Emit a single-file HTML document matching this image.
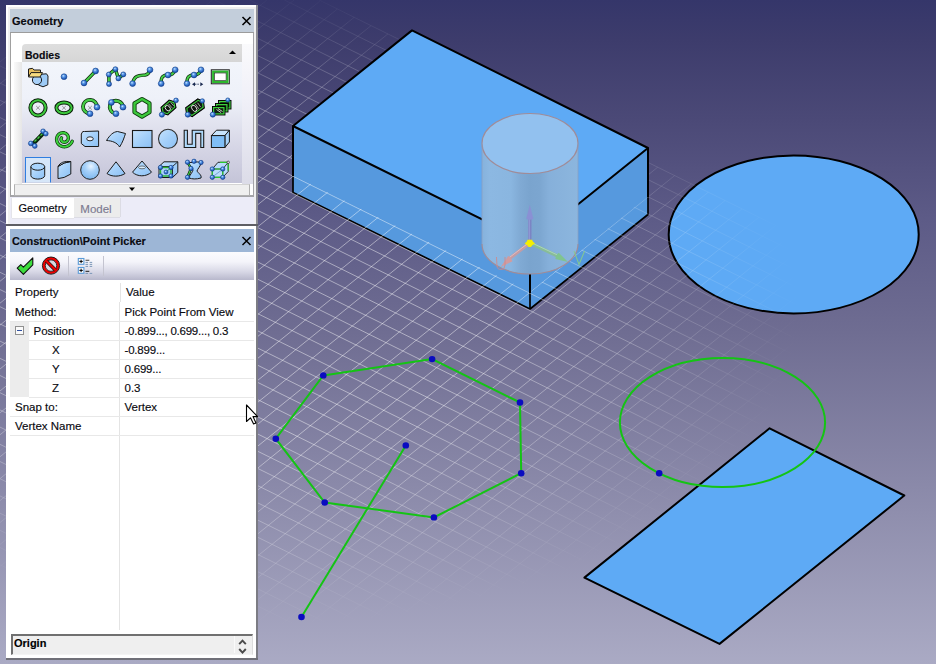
<!DOCTYPE html>
<html><head><meta charset="utf-8">
<style>
html,body{margin:0;padding:0;}
body{width:936px;height:664px;overflow:hidden;position:relative;font-family:"Liberation Sans",sans-serif;
background:linear-gradient(to bottom,#35366a 0%,#3d3c6c 6%,#4b4977 18%,#5d5b87 33%,#6f6d92 50%,#aaaac4 100%);}
.a{position:absolute;}
.t{position:absolute;white-space:nowrap;line-height:1;color:#0a0a10;-webkit-text-stroke:0.15px currentColor;}
svg{position:absolute;left:0;top:0;}
</style></head><body>
<svg id="scene" width="936" height="664" viewBox="0 0 936 664">
<defs>
<radialGradient id="gfade" gradientUnits="userSpaceOnUse" cx="272" cy="309" r="530" gradientTransform="translate(272 309) scale(1 0.6038) translate(-272 -309)">
<stop offset="0" stop-color="#fff" stop-opacity="1"/>
<stop offset="0.4" stop-color="#fff" stop-opacity="1"/>
<stop offset="0.7" stop-color="#fff" stop-opacity="0.55"/>
<stop offset="0.88" stop-color="#fff" stop-opacity="0.18"/>
<stop offset="1" stop-color="#fff" stop-opacity="0"/>
</radialGradient>
<mask id="gmask" maskUnits="userSpaceOnUse" x="0" y="0" width="936" height="664">
<rect x="0" y="0" width="936" height="664" fill="url(#gfade)"/>
</mask>
<linearGradient id="cylg" x1="0" y1="0" x2="1" y2="0">
<stop offset="0" stop-color="#86b2dc"/>
<stop offset="0.08" stop-color="#8cb8e2"/>
<stop offset="0.3" stop-color="#8ab6e0"/>
<stop offset="0.4" stop-color="#80aad4"/>
<stop offset="0.5" stop-color="#7aa4ce"/>
<stop offset="0.6" stop-color="#7ca6d0"/>
<stop offset="0.7" stop-color="#86b0da"/>
<stop offset="1" stop-color="#8cb6de"/>
</linearGradient>
</defs>
<!-- disk -->
<ellipse cx="793.7" cy="234.4" rx="125" ry="79" fill="#5eaaf5" stroke="#000" stroke-width="2"/>
<!-- box lower faces -->
<polygon points="293,126 530,243 530,309 293,192" fill="#5699de"/>
<polygon points="530,243 648,148 648,214.5 530,309" fill="#5699de"/>
<g stroke="#000" stroke-width="1.7" fill="none" stroke-linejoin="round">
<polyline points="293,175 293,192.4 530,309 648,214.5 648,196"/>
<line x1="530" y1="292" x2="530" y2="309"/>
</g>
<!-- grid -->
<g mask="url(#gmask)">
<g id="grid" stroke="#ffffff" stroke-opacity="0.45" stroke-width="1" fill="none">
<line x1="168.8" y1="-74.3" x2="994.9" y2="333.8"/>
<line x1="155.5" y1="-63.7" x2="981.7" y2="344.5"/>
<line x1="142.3" y1="-53.0" x2="968.5" y2="355.2"/>
<line x1="129.1" y1="-42.3" x2="955.2" y2="365.8"/>
<line x1="115.9" y1="-31.7" x2="942.0" y2="376.5"/>
<line x1="102.7" y1="-21.0" x2="928.8" y2="387.2"/>
<line x1="89.4" y1="-10.3" x2="915.6" y2="397.8"/>
<line x1="76.2" y1="0.3" x2="902.4" y2="408.5"/>
<line x1="63.0" y1="11.0" x2="889.1" y2="419.2"/>
<line x1="49.8" y1="21.7" x2="875.9" y2="429.9"/>
<line x1="36.6" y1="32.4" x2="862.7" y2="440.5"/>
<line x1="23.3" y1="43.0" x2="849.5" y2="451.2"/>
<line x1="10.1" y1="53.7" x2="836.3" y2="461.9"/>
<line x1="-3.1" y1="64.4" x2="823.0" y2="472.5"/>
<line x1="-16.3" y1="75.0" x2="809.8" y2="483.2"/>
<line x1="-29.5" y1="85.7" x2="796.6" y2="493.9"/>
<line x1="-42.8" y1="96.4" x2="783.4" y2="504.5"/>
<line x1="-56.0" y1="107.0" x2="770.2" y2="515.2"/>
<line x1="-69.2" y1="117.7" x2="756.9" y2="525.9"/>
<line x1="-82.4" y1="128.4" x2="743.7" y2="536.5"/>
<line x1="-95.6" y1="139.1" x2="730.5" y2="547.2"/>
<line x1="-108.9" y1="149.7" x2="717.3" y2="557.9"/>
<line x1="-122.1" y1="160.4" x2="704.1" y2="568.6"/>
<line x1="-135.3" y1="171.1" x2="690.8" y2="579.2"/>
<line x1="-148.5" y1="181.7" x2="677.6" y2="589.9"/>
<line x1="-161.7" y1="192.4" x2="664.4" y2="600.6"/>
<line x1="-175.0" y1="203.1" x2="651.2" y2="611.2"/>
<line x1="-188.2" y1="213.7" x2="638.0" y2="621.9"/>
<line x1="-201.4" y1="224.4" x2="624.7" y2="632.6"/>
<line x1="-214.6" y1="235.1" x2="611.5" y2="643.2"/>
<line x1="-227.8" y1="245.8" x2="598.3" y2="653.9"/>
<line x1="-241.1" y1="256.4" x2="585.1" y2="664.6"/>
<line x1="-254.3" y1="267.1" x2="571.9" y2="675.3"/>
<line x1="-267.5" y1="277.8" x2="558.6" y2="685.9"/>
<line x1="-280.7" y1="288.4" x2="545.4" y2="696.6"/>
<line x1="-293.9" y1="299.1" x2="532.2" y2="707.3"/>
<line x1="-307.2" y1="309.8" x2="519.0" y2="717.9"/>
<line x1="-320.4" y1="320.4" x2="505.8" y2="728.6"/>
<line x1="-333.6" y1="331.1" x2="492.5" y2="739.3"/>
<line x1="-346.8" y1="341.8" x2="479.3" y2="750.0"/>
<line x1="-360.0" y1="352.5" x2="466.1" y2="760.6"/>
<line x1="-373.3" y1="363.1" x2="452.9" y2="771.3"/>
<line x1="-386.5" y1="373.8" x2="439.7" y2="782.0"/>
<line x1="-399.7" y1="384.5" x2="426.4" y2="792.6"/>
<line x1="-412.9" y1="395.1" x2="413.2" y2="803.3"/>
<line x1="168.8" y1="-74.3" x2="-412.9" y2="395.1"/>
<line x1="185.6" y1="-66.0" x2="-396.1" y2="403.5"/>
<line x1="202.5" y1="-57.7" x2="-379.2" y2="411.8"/>
<line x1="219.3" y1="-49.4" x2="-362.3" y2="420.1"/>
<line x1="236.2" y1="-41.0" x2="-345.5" y2="428.5"/>
<line x1="253.1" y1="-32.7" x2="-328.6" y2="436.8"/>
<line x1="269.9" y1="-24.4" x2="-311.8" y2="445.1"/>
<line x1="286.8" y1="-16.0" x2="-294.9" y2="453.4"/>
<line x1="303.6" y1="-7.7" x2="-278.0" y2="461.8"/>
<line x1="320.5" y1="0.6" x2="-261.2" y2="470.1"/>
<line x1="337.4" y1="9.0" x2="-244.3" y2="478.4"/>
<line x1="354.2" y1="17.3" x2="-227.5" y2="486.8"/>
<line x1="371.1" y1="25.6" x2="-210.6" y2="495.1"/>
<line x1="387.9" y1="33.9" x2="-193.7" y2="503.4"/>
<line x1="404.8" y1="42.3" x2="-176.9" y2="511.8"/>
<line x1="421.7" y1="50.6" x2="-160.0" y2="520.1"/>
<line x1="438.5" y1="58.9" x2="-143.2" y2="528.4"/>
<line x1="455.4" y1="67.3" x2="-126.3" y2="536.7"/>
<line x1="472.2" y1="75.6" x2="-109.4" y2="545.1"/>
<line x1="489.1" y1="83.9" x2="-92.6" y2="553.4"/>
<line x1="506.0" y1="92.2" x2="-75.7" y2="561.7"/>
<line x1="522.8" y1="100.6" x2="-58.9" y2="570.1"/>
<line x1="539.7" y1="108.9" x2="-42.0" y2="578.4"/>
<line x1="556.5" y1="117.2" x2="-25.1" y2="586.7"/>
<line x1="573.4" y1="125.6" x2="-8.3" y2="595.0"/>
<line x1="590.3" y1="133.9" x2="8.6" y2="603.4"/>
<line x1="607.1" y1="142.2" x2="25.4" y2="611.7"/>
<line x1="624.0" y1="150.6" x2="42.3" y2="620.0"/>
<line x1="640.8" y1="158.9" x2="59.2" y2="628.4"/>
<line x1="657.7" y1="167.2" x2="76.0" y2="636.7"/>
<line x1="674.6" y1="175.6" x2="92.9" y2="645.0"/>
<line x1="691.4" y1="183.9" x2="109.7" y2="653.4"/>
<line x1="708.3" y1="192.2" x2="126.6" y2="661.7"/>
<line x1="725.1" y1="200.5" x2="143.5" y2="670.0"/>
<line x1="742.0" y1="208.9" x2="160.3" y2="678.4"/>
<line x1="758.9" y1="217.2" x2="177.2" y2="686.7"/>
<line x1="775.7" y1="225.5" x2="194.0" y2="695.0"/>
<line x1="792.6" y1="233.9" x2="210.9" y2="703.3"/>
<line x1="809.4" y1="242.2" x2="227.8" y2="711.7"/>
<line x1="826.3" y1="250.5" x2="244.6" y2="720.0"/>
<line x1="843.2" y1="258.9" x2="261.5" y2="728.3"/>
<line x1="860.0" y1="267.2" x2="278.3" y2="736.7"/>
<line x1="876.9" y1="275.5" x2="295.2" y2="745.0"/>
<line x1="893.7" y1="283.8" x2="312.1" y2="753.3"/>
<line x1="910.6" y1="292.2" x2="328.9" y2="761.7"/>
<line x1="927.5" y1="300.5" x2="345.8" y2="770.0"/>
<line x1="944.3" y1="308.8" x2="362.6" y2="778.3"/>
<line x1="961.2" y1="317.2" x2="379.5" y2="786.6"/>
<line x1="978.0" y1="325.5" x2="396.4" y2="795.0"/>
<line x1="994.9" y1="333.8" x2="413.2" y2="803.3"/>
</g>
</g>
<!-- box upper faces (above grid plane) -->
<polygon points="412,30.4 293,126 530,243 648,148" fill="#5eaaf5"/>
<polygon points="293,126 530,243 530,291.8 293,175.2" fill="#5699de"/>
<polygon points="530,243 648,148 648,195.8 530,291.8" fill="#5699de"/>
<g stroke="#000" stroke-width="2" fill="none" stroke-linejoin="round">
<polygon points="412,30.4 293,126 530,243 648,148"/>
<polyline points="293,126 293,176"/>
<polyline points="648,148 648,197"/>
<line x1="530" y1="243" x2="530" y2="293"/>
</g>
<!-- cylinder -->
<path d="M482,143.5 L482,244 A48,30 0 0 0 578,244 L578,143.5 Z" fill="url(#cylg)"/>
<ellipse cx="530" cy="143.5" rx="48" ry="30" fill="#92c1ef"/>
<g fill="none" stroke="#a08c98" stroke-width="1.2">
<ellipse cx="530" cy="143.5" rx="48" ry="30"/>
<path d="M482,244 A48,30 0 0 0 578,244"/>
</g>
<path d="M482,143.5 L482,244 M578,143.5 L578,244" stroke="#8aa0c0" stroke-width="0.8" fill="none"/>
<!-- triad -->
<g>
<line x1="529.8" y1="242" x2="529.8" y2="218" stroke="#7c84c4" stroke-width="3.4"/>
<line x1="529.2" y1="242" x2="529.2" y2="218" stroke="#a0a8e0" stroke-width="0.8"/>
<path d="M529.8,204.8 L533.4,219.0 Q529.8,220.5 526.2,219.0 Z" fill="#8a90d4"/>
<line x1="529.8" y1="243" x2="509.5" y2="258.5" stroke="#c49ca4" stroke-width="3.2"/>
<line x1="529.3" y1="242.3" x2="509" y2="257.8" stroke="#e4c4c8" stroke-width="0.8"/>
<path d="M500.8,267.0 L508.1,256.1 Q511.4,257.7 512.5,261.3 Z" fill="#d09ca0"/>
<line x1="529.8" y1="243" x2="557" y2="255.8" stroke="#88bc98" stroke-width="3.2"/>
<line x1="530.3" y1="242.2" x2="557.5" y2="255" stroke="#b4dcc0" stroke-width="0.8"/>
<path d="M568.0,261.9 L555.3,258.9 Q555.7,255.1 558.7,252.7 Z" fill="#80c490"/>
<path d="M527.6,239.8 L532,239.8 L533,241.8 L535,243.5 L532.5,245 L531,247 L528.6,247 L527,245 L524.6,243.5 L526.6,241.8 Z" fill="#f4ee00"/>
<path d="M496.5,257 L497,266 Q497.5,270 501.5,269.5 Q505,269 505,265 L505,257" fill="none" stroke="#d08888" stroke-width="1" opacity="0.85"/>
<path d="M574,251 L579,264.5 L584.6,251" fill="none" stroke="#88cc88" stroke-width="1.1" opacity="0.85"/>
</g>
<!-- rectangle -->
<polygon points="769.6,428.3 904.3,495.5 719.5,643.9 584.4,577.6" fill="#5eaaf5" stroke="#000" stroke-width="2" stroke-linejoin="round"/>
<!-- green circle -->
<ellipse cx="722.5" cy="422.5" rx="102.6" ry="64.5" fill="none" stroke="#14c414" stroke-width="2"/>

<!-- heptagon & line -->
<g stroke="#14c414" stroke-width="2" fill="none">
<polygon points="323.3,375.4 432.1,359.1 520,402.5 521.2,473.2 433.9,517.4 324.7,502.5 275.8,438.7"/>
<line x1="405.8" y1="445.4" x2="301.5" y2="617"/>
</g>
<g fill="#0a0cc0">
<ellipse cx="323.3" cy="375.4" rx="3.3" ry="3.2"/>
<ellipse cx="432.1" cy="359.1" rx="3.3" ry="3.2"/>
<ellipse cx="520" cy="402.5" rx="3.3" ry="3.2"/>
<ellipse cx="521.2" cy="473.2" rx="3.3" ry="3.2"/>
<ellipse cx="433.9" cy="517.4" rx="3.3" ry="3.2"/>
<ellipse cx="324.7" cy="502.5" rx="3.3" ry="3.2"/>
<ellipse cx="275.8" cy="438.7" rx="3.3" ry="3.2"/>
<ellipse cx="405.8" cy="445.4" rx="3.3" ry="3.2"/>
<ellipse cx="301.5" cy="617" rx="3.3" ry="3.2"/>
<ellipse cx="659.2" cy="473.2" rx="3.3" ry="3.2"/>
</g>
</svg>

<!-- PANEL 1 -->
<div class="a" style="left:6px;top:5px;width:250px;height:219px;background:#fff;"></div>
<div class="a" style="left:256px;top:5px;width:2px;height:221px;background:#8c8c94;"></div>
<div class="a" style="left:8px;top:7px;width:248px;height:217px;background:#f0f0f0;"></div>
<div class="a" style="left:10px;top:9px;width:244px;height:23px;background:#c3cedb;"></div>
<div class="a" style="left:10px;top:32px;width:244px;height:1px;background:#9c9c9c;"></div>
<div class="t" style="left:12px;top:15.5px;font-size:11px;font-weight:bold;">Geometry</div>
<svg class="a" style="left:241px;top:16px" width="11" height="10" viewBox="0 0 11 10"><path d="M1.5,1 L9.5,9 M9.5,1 L1.5,9" stroke="#000" stroke-width="1.6"/></svg>
<div class="a" style="left:10px;top:33px;width:244px;height:191px;background:#ececf8;"></div>
<div class="a" style="left:10px;top:33px;width:244px;height:164px;background:#fff;border-left:1px solid #a0a0a0;border-bottom:2px solid #a4a4a8;box-sizing:border-box;"></div>
<div class="a" style="left:253px;top:33px;width:1px;height:164px;background:#a4a4a8;"></div>
<div class="a" style="left:14px;top:62px;width:8px;height:122px;background:linear-gradient(to right,#fafafa,#e6e6e6);"></div>
<div class="a" style="left:22px;top:44px;width:220px;height:18px;background:linear-gradient(to bottom,#dedede,#d6d6d6);border-radius:4px 0 0 0;"></div>
<div class="t" style="left:25px;top:49.7px;font-size:10.5px;font-weight:bold;">Bodies</div>
<svg class="a" style="left:228px;top:49px" width="9" height="6" viewBox="0 0 9 6"><path d="M1,5 L4.5,1.5 L8,5 Z" fill="#000"/></svg>
<div class="a" style="left:22px;top:62px;width:220px;height:120.5px;background:linear-gradient(to bottom,#f2f5fb 0%,#eef1f9 30%,#d6d6e6 70%,#c4c4d8 100%);"></div>
<div class="a" style="left:242px;top:44px;width:11px;height:140px;background:linear-gradient(to bottom,#fafafc,#f0f0f8 40%,#dcdce8);"></div>
<div class="a" style="left:14px;top:183.5px;width:234px;height:10px;background:#efefef;border:1px solid #b0b0b0;border-top-color:#d4d4d4;"></div>
<svg class="a" style="left:128px;top:186px" width="8" height="6" viewBox="0 0 8 6"><path d="M1,1.5 L7,1.5 L4,5 Z" fill="#000"/></svg>
<div class="a" style="left:12px;top:198px;width:62px;height:20px;background:#fff;box-shadow:-1px 0 0 #e4e4ea, 0 1px 0 #e4e4ea;"></div>
<div class="a" style="left:74px;top:198px;width:46px;height:19px;background:#ececec;box-shadow:1px 0 0 #dcdce4, 0 1px 0 #dcdce4;"></div>
<div class="t" style="left:18.5px;top:203.3px;font-size:11px;">Geometry</div>
<div class="t" style="left:80.3px;top:203.9px;font-size:11.5px;color:#7c7a90;">Model</div>
<!-- palette icons -->
<svg class="a" style="left:0;top:0" width="260" height="190" viewBox="0 0 260 190"><clipPath id="palclip"><rect x="22" y="62" width="220" height="120.5"/></clipPath><defs>
<radialGradient id="ballg" cx="0.4" cy="0.35" r="0.65"><stop offset="0" stop-color="#cfe6ff"/><stop offset="0.35" stop-color="#5a9ae8"/><stop offset="1" stop-color="#1246a8"/></radialGradient>
<linearGradient id="bsurf" x1="0" y1="0" x2="1" y2="1"><stop offset="0" stop-color="#c6e2fc"/><stop offset="0.5" stop-color="#a4d0fa"/><stop offset="1" stop-color="#8cc0f4"/></linearGradient>
<radialGradient id="sphg" cx="0.55" cy="0.3" r="0.75"><stop offset="0" stop-color="#e8f4ff"/><stop offset="0.4" stop-color="#a8d2fa"/><stop offset="1" stop-color="#78b4ee"/></radialGradient>
</defs><g clip-path="url(#palclip)">
<rect x="25.5" y="157.5" width="25" height="27" fill="#d6e6f8" stroke="#2f7ee0" stroke-width="1"/>
<path d="M37.8,74.5 L46.5,73.8 L48,76 L47.8,84.8 L43,86.8 L38.5,85 Z" fill="#9ccaf6" stroke="#1a1a1a" stroke-width="1"/>
<circle cx="37" cy="80" r="4.6" fill="#a8d0f8" stroke="#1a1a1a" stroke-width="1"/>
<path d="M28.5,69 L32.5,68.3 L34,70 L40.5,70 L40.5,73 L28.5,76.5 Z" fill="#e8c060" stroke="#1a1a1a" stroke-width="1"/>
<path d="M28.5,77 L31,72.6 L42.5,72.6 L40,77 Z" fill="#f8dc80" stroke="#1a1a1a" stroke-width="1"/>
<circle cx="64" cy="76.7" r="2.9" fill="url(#ballg)" stroke="#12408a" stroke-width="0.6"/>
<path d="M84,83 L95.6,71" fill="none" stroke="#0a280a" stroke-width="3.4" stroke-linecap="round" stroke-linejoin="round"/><path d="M84,83 L95.6,71" fill="none" stroke="#46cc46" stroke-width="2.0" stroke-linecap="round" stroke-linejoin="round"/>
<circle cx="84" cy="83" r="2.9" fill="url(#ballg)" stroke="#12408a" stroke-width="0.6"/><circle cx="95.6" cy="71" r="2.9" fill="url(#ballg)" stroke="#12408a" stroke-width="0.6"/>
<path d="M109,84 L108.8,74.5 L115.4,69.2 L118.4,78.4 L123.3,74.4" fill="none" stroke="#0a280a" stroke-width="3.4" stroke-linecap="round" stroke-linejoin="round"/><path d="M109,84 L108.8,74.5 L115.4,69.2 L118.4,78.4 L123.3,74.4" fill="none" stroke="#46cc46" stroke-width="2.0" stroke-linecap="round" stroke-linejoin="round"/>
<circle cx="109" cy="84" r="2.5" fill="url(#ballg)" stroke="#12408a" stroke-width="0.6"/>
<circle cx="108.8" cy="74.5" r="2.5" fill="url(#ballg)" stroke="#12408a" stroke-width="0.6"/>
<circle cx="115.4" cy="69.2" r="2.5" fill="url(#ballg)" stroke="#12408a" stroke-width="0.6"/>
<circle cx="118.4" cy="78.4" r="2.5" fill="url(#ballg)" stroke="#12408a" stroke-width="0.6"/>
<circle cx="123.3" cy="74.4" r="2.5" fill="url(#ballg)" stroke="#12408a" stroke-width="0.6"/>
<path d="M132.6,83.6 C134,75 140,75.5 145,75 C149,74.5 149,72 150,69.8" fill="none" stroke="#0a280a" stroke-width="3.4" stroke-linecap="round" stroke-linejoin="round"/><path d="M132.6,83.6 C134,75 140,75.5 145,75 C149,74.5 149,72 150,69.8" fill="none" stroke="#46cc46" stroke-width="2.0" stroke-linecap="round" stroke-linejoin="round"/>
<circle cx="132.6" cy="83.6" r="2.9" fill="url(#ballg)" stroke="#12408a" stroke-width="0.6"/><circle cx="150" cy="69.8" r="2.9" fill="url(#ballg)" stroke="#12408a" stroke-width="0.6"/>
<path d="M161.2,83.6 C160.5,76 164,75 168,75 C172,75 174,73 175.2,69.8" fill="none" stroke="#0a280a" stroke-width="3.4" stroke-linecap="round" stroke-linejoin="round"/><path d="M161.2,83.6 C160.5,76 164,75 168,75 C172,75 174,73 175.2,69.8" fill="none" stroke="#46cc46" stroke-width="2.0" stroke-linecap="round" stroke-linejoin="round"/>
<circle cx="161.2" cy="83.6" r="2.9" fill="url(#ballg)" stroke="#12408a" stroke-width="0.6"/><circle cx="168" cy="75" r="2.9" fill="url(#ballg)" stroke="#12408a" stroke-width="0.6"/><circle cx="175.2" cy="69.8" r="2.9" fill="url(#ballg)" stroke="#12408a" stroke-width="0.6"/>
<path d="M187,83.6 C186.5,76 190,75 194,75 C198,75 200,73 201,69.8" fill="none" stroke="#0a280a" stroke-width="3.4" stroke-linecap="round" stroke-linejoin="round"/><path d="M187,83.6 C186.5,76 190,75 194,75 C198,75 200,73 201,69.8" fill="none" stroke="#46cc46" stroke-width="2.0" stroke-linecap="round" stroke-linejoin="round"/>
<circle cx="187" cy="83.6" r="2.9" fill="url(#ballg)" stroke="#12408a" stroke-width="0.6"/><circle cx="194" cy="75" r="2.9" fill="url(#ballg)" stroke="#12408a" stroke-width="0.6"/><circle cx="201" cy="69.8" r="2.9" fill="url(#ballg)" stroke="#12408a" stroke-width="0.6"/>
<path d="M192,84.2 L195,82.2 L195,86.2 Z M203.3,84.2 L200.3,82.2 L200.3,86.2 Z" fill="#1a2a50"/><path d="M195,84.2 h1.4 M197.4,84.2 h1.4" stroke="#1a2a50" stroke-width="0.9"/>
<rect x="211.3" y="69.8" width="18" height="14" fill="none" stroke="#1a1a1a" stroke-width="1"/><rect x="213.2" y="71.7" width="14.2" height="10.2" fill="#fff" stroke="#2cb82c" stroke-width="2.2"/><rect x="214.5" y="73" width="11.6" height="7.6" fill="none" stroke="#1a1a1a" stroke-width="0.6"/>
<ellipse cx="38" cy="107.8" rx="7.6" ry="7.6" fill="none" stroke="#0a200a" stroke-width="4.0"/><ellipse cx="38" cy="107.8" rx="7.6" ry="7.6" fill="none" stroke="#3cc83c" stroke-width="2.0"/><path d="M36.2,106.0 L39.8,109.6 M39.8,106.0 L36.2,109.6" stroke="#808080" stroke-width="0.8"/>
<ellipse cx="64" cy="107.8" rx="7.6" ry="5.4" fill="none" stroke="#0a200a" stroke-width="4.0"/><ellipse cx="64" cy="107.8" rx="7.6" ry="5.4" fill="none" stroke="#3cc83c" stroke-width="2.0"/><path d="M62.2,106.0 L65.8,109.6 M65.8,106.0 L62.2,109.6" stroke="#808080" stroke-width="0.8"/>
<path d="M88.2,106.0 L91.8,109.6 M91.8,106.0 L88.2,109.6" stroke="#808080" stroke-width="0.8"/><path d="M90,113.5 A7,6.8 0 1 1 97,107.2" fill="none" stroke="#0a280a" stroke-width="3.8" stroke-linecap="round" stroke-linejoin="round"/><path d="M90,113.5 A7,6.8 0 1 1 97,107.2" fill="none" stroke="#46cc46" stroke-width="2.4" stroke-linecap="round" stroke-linejoin="round"/><circle cx="97" cy="107.2" r="2.9" fill="url(#ballg)" stroke="#12408a" stroke-width="0.6"/><circle cx="90" cy="113.7" r="2.9" fill="url(#ballg)" stroke="#12408a" stroke-width="0.6"/>
<path d="M116,113.6 A7,6.8 0 0 1 111.4,102.5 A7,6.8 0 0 1 123,107.2" fill="none" stroke="#0a280a" stroke-width="3.8" stroke-linecap="round" stroke-linejoin="round"/><path d="M116,113.6 A7,6.8 0 0 1 111.4,102.5 A7,6.8 0 0 1 123,107.2" fill="none" stroke="#46cc46" stroke-width="2.4" stroke-linecap="round" stroke-linejoin="round"/><circle cx="111.4" cy="102.4" r="2.9" fill="url(#ballg)" stroke="#12408a" stroke-width="0.6"/><circle cx="123" cy="107.2" r="2.9" fill="url(#ballg)" stroke="#12408a" stroke-width="0.6"/><circle cx="116" cy="113.7" r="2.9" fill="url(#ballg)" stroke="#12408a" stroke-width="0.6"/>
<polygon points="142,99 149.5,103.4 149.5,112.2 142,116.6 134.5,112.2 134.5,103.4" fill="none" stroke="#0c3a0c" stroke-width="4.2" stroke-linejoin="round"/><polygon points="142,99 149.5,103.4 149.5,112.2 142,116.6 134.5,112.2 134.5,103.4" fill="none" stroke="#3cc83c" stroke-width="2.4" stroke-linejoin="round"/>
<g transform="translate(168.5,107.5) rotate(-42)"><polygon points="-8.5,0 -5.5,-5.2 5.5,-5.2 8.5,0 5.5,5.2 -5.5,5.2" fill="#101810" stroke="#000" stroke-width="1"/><polygon points="-7.2,0 -4.9,-3.9000000000000004 4.9,-3.9000000000000004 7.2,0 4.9,3.9000000000000004 -4.9,3.9000000000000004" fill="none" stroke="#3cd03c" stroke-width="1.1"/><ellipse cx="-1" cy="0" rx="2.2" ry="3.0" fill="none" stroke="#e8e8e8" stroke-width="0.9"/><path d="M2.5,-2.7 v5.4 M5,-2.2 v4.4" stroke="#d0d0d0" stroke-width="0.7"/></g><circle cx="161.9" cy="114.6" r="2.6" fill="url(#ballg)" stroke="#12408a" stroke-width="0.6"/><circle cx="176" cy="100.4" r="2.4" fill="url(#ballg)" stroke="#12408a" stroke-width="0.6"/>
<g transform="translate(195,107.8) rotate(-36)"><polygon points="-10.5,0 -7.5,-5.6 7.5,-5.6 10.5,0 7.5,5.6 -7.5,5.6" fill="#101810" stroke="#000" stroke-width="1"/><polygon points="-9.2,0 -6.9,-4.3 6.9,-4.3 9.2,0 6.9,4.3 -6.9,4.3" fill="none" stroke="#3cd03c" stroke-width="1.1"/><ellipse cx="-1" cy="0" rx="2.2" ry="3.3999999999999995" fill="none" stroke="#e8e8e8" stroke-width="0.9"/><path d="M2.5,-3.0999999999999996 v6.199999999999999 M5,-2.5999999999999996 v5.199999999999999" stroke="#d0d0d0" stroke-width="0.7"/></g><circle cx="187.8" cy="114.6" r="2.6" fill="url(#ballg)" stroke="#12408a" stroke-width="0.6"/><circle cx="202.3" cy="101" r="2.3" fill="url(#ballg)" stroke="#12408a" stroke-width="0.6"/>
<rect x="218.5" y="100.5" width="12.5" height="8.5" fill="#10200f" stroke="#000" stroke-width="0.9"/><rect x="219.6" y="101.6" width="10.3" height="6.3" fill="#10200f" stroke="#3cd03c" stroke-width="1.2"/>
<rect x="215.5" y="103.5" width="12.5" height="8.5" fill="#10200f" stroke="#000" stroke-width="0.9"/><rect x="216.6" y="104.6" width="10.3" height="6.3" fill="#10200f" stroke="#3cd03c" stroke-width="1.2"/>
<rect x="212.5" y="106.5" width="12.5" height="8.5" fill="#10200f" stroke="#000" stroke-width="0.9"/><rect x="213.6" y="107.6" width="10.3" height="6.3" fill="#10200f" stroke="#3cd03c" stroke-width="1.2"/>
<path d="M216.5,109.5 L221,112.5 M218,108.6 L222.5,111.5" stroke="#e0e0e0" stroke-width="0.9"/><circle cx="212.8" cy="114.6" r="2.6" fill="url(#ballg)" stroke="#12408a" stroke-width="0.6"/><circle cx="227.8" cy="100" r="2.1" fill="url(#ballg)" stroke="#12408a" stroke-width="0.6"/>
<path d="M33,144 L44,132.5" stroke="#0c2a0c" stroke-width="4" stroke-linecap="round"/><path d="M34.5,141.5 L36.5,139.5 M37.5,138.8 L39.5,136.5 M40.5,135.6 L42.5,133.6" stroke="#46d046" stroke-width="1.3"/><circle cx="30.8" cy="143.4" r="2.4" fill="url(#ballg)" stroke="#12408a" stroke-width="0.6"/><circle cx="34.8" cy="146" r="2.4" fill="url(#ballg)" stroke="#12408a" stroke-width="0.6"/><circle cx="43.1" cy="131.3" r="2.4" fill="url(#ballg)" stroke="#12408a" stroke-width="0.6"/><circle cx="45.8" cy="133.7" r="2.4" fill="url(#ballg)" stroke="#12408a" stroke-width="0.6"/>
<path d="M72.21,141.23 L71.58,142.50 L70.78,143.64 L69.81,144.63 L68.72,145.44 L67.53,146.06 L66.27,146.48 L64.98,146.69 L63.68,146.69 L62.43,146.49 L61.23,146.10 L60.13,145.54 L59.15,144.81 L58.31,143.95 L57.63,142.99 L57.11,141.94 L56.77,140.84 L56.62,139.72 L56.64,138.61 L56.84,137.53 L57.20,136.52 L57.70,135.59 L58.34,134.77 L59.09,134.07 L59.93,133.51 L60.82,133.09 L61.76,132.83 L62.71,132.73 L63.64,132.77 L64.54,132.96 L65.38,133.29 L66.14,133.74 L66.80,134.29 L67.36,134.92 L67.80,135.63 L68.11,136.37 L68.30,137.15 L68.36,137.92 L68.29,138.67 L68.11,139.39 L67.82,140.05 L67.44,140.65 L66.98,141.16 L66.46,141.58 L65.89,141.90 L65.29,142.11 L64.69,142.23 L64.09,142.24 L63.51,142.16 L62.97,141.99 L62.49,141.74 L62.06,141.43 L61.70,141.06 L61.42,140.65 L61.22,140.22 L61.10,139.78 L61.05,139.34 L61.08,138.92 L61.17,138.52 L61.33,138.16 L61.53,137.85" fill="none" stroke="#0c3a0c" stroke-width="3.4" stroke-linecap="round" stroke-linejoin="round"/><path d="M72.21,141.23 L71.58,142.50 L70.78,143.64 L69.81,144.63 L68.72,145.44 L67.53,146.06 L66.27,146.48 L64.98,146.69 L63.68,146.69 L62.43,146.49 L61.23,146.10 L60.13,145.54 L59.15,144.81 L58.31,143.95 L57.63,142.99 L57.11,141.94 L56.77,140.84 L56.62,139.72 L56.64,138.61 L56.84,137.53 L57.20,136.52 L57.70,135.59 L58.34,134.77 L59.09,134.07 L59.93,133.51 L60.82,133.09 L61.76,132.83 L62.71,132.73 L63.64,132.77 L64.54,132.96 L65.38,133.29 L66.14,133.74 L66.80,134.29 L67.36,134.92 L67.80,135.63 L68.11,136.37 L68.30,137.15 L68.36,137.92 L68.29,138.67 L68.11,139.39 L67.82,140.05 L67.44,140.65 L66.98,141.16 L66.46,141.58 L65.89,141.90 L65.29,142.11 L64.69,142.23 L64.09,142.24 L63.51,142.16 L62.97,141.99 L62.49,141.74 L62.06,141.43 L61.70,141.06 L61.42,140.65 L61.22,140.22 L61.10,139.78 L61.05,139.34 L61.08,138.92 L61.17,138.52 L61.33,138.16 L61.53,137.85" fill="none" stroke="#3cd03c" stroke-width="2.0" stroke-linecap="round" stroke-linejoin="round"/>
<path d="M82.8,131.5 L84.5,131.5 L98.6,131 L98.6,146.5 L85,146.5 L81.3,143.5 L81.3,134 Z" fill="url(#bsurf)" stroke="#1a1a1a" stroke-width="1"/><ellipse cx="90" cy="138.8" rx="3.3" ry="2" fill="#f0f4fc" stroke="#1a1a1a" stroke-width="0.9"/>
<path d="M106.5,140.5 C110,135 113,132 117.5,131.5 L125.5,133.5 C124,138 122.8,142 119.6,147 C117,142.5 112,140.8 106.5,140.5 Z" fill="url(#bsurf)" stroke="#1a1a1a" stroke-width="1"/>
<rect x="132.5" y="130.5" width="19.5" height="17" fill="url(#bsurf)" stroke="#1a1a1a" stroke-width="1.1"/>
<circle cx="168" cy="138.8" r="9.5" fill="url(#bsurf)" stroke="#303030" stroke-width="1.1"/>
<path d="M184.2,130.2 L187.4,130.2 L187.4,144.3 L192.2,144.3 L192.2,130.2 L203.7,130.2 L203.7,147.5 L200.8,147.5 L200.8,133.4 L195.7,133.4 L195.7,147.5 L184.2,147.5 Z" fill="#b0dafc" stroke="#1a1a1a" stroke-width="1.1" stroke-linejoin="miter"/>
<path d="M211.4,135.6 L216.5,130.2 L229.4,130.2 L224.9,135.6 Z" fill="#c8e4fc" stroke="#1a1a1a" stroke-width="1" stroke-linejoin="round"/><path d="M224.9,135.6 L229.4,130.2 L229.4,142 L224.9,147.5 Z" fill="#a8d4fc" stroke="#1a1a1a" stroke-width="1" stroke-linejoin="round"/><rect x="211.4" y="135.6" width="13.5" height="11.9" fill="#80bef6" stroke="#1a1a1a" stroke-width="1"/>
<path d="M30.9,166.7 L30.9,175.6 A6.9,3.5 0 0 0 44.7,175.6 L44.7,166.7 Z" fill="url(#bsurf)" stroke="#1a1a1a" stroke-width="1"/><ellipse cx="37.8" cy="166.7" rx="6.9" ry="3.5" fill="#a8d4fc" stroke="#1a1a1a" stroke-width="1"/>
<path d="M58,166.5 L58,178.6 Q64,178.5 70.8,174 L70.8,161.5 Q64,162 58,166.5 Z" fill="url(#bsurf)" stroke="#1a1a1a" stroke-width="1"/><path d="M58,166.5 Q61,160.5 70.8,161.5 Q64,162 58,166.5 Z" fill="#c8e2fc" stroke="#1a1a1a" stroke-width="1"/>
<circle cx="90" cy="170" r="9.3" fill="url(#sphg)" stroke="#202020" stroke-width="1"/>
<path d="M116,161.8 L125,173.5 C120,177 111.5,177 107,173.5 Z" fill="url(#bsurf)" stroke="#1a1a1a" stroke-width="1"/>
<path d="M142,161 L151.5,172.2 C146,177 137.5,177 132.5,172.2 Z" fill="url(#bsurf)" stroke="#1a1a1a" stroke-width="1"/><ellipse cx="142" cy="167.4" rx="3.5" ry="1.4" fill="#d8ecfc" stroke="#404040" stroke-width="0.7"/>
<path d="M159,166.5 L164,161.8 L177.8,161.8 L177.8,172.5 L172.5,177.5 L159,177.5 Z" fill="url(#bsurf)" stroke="#1a1a1a" stroke-width="1"/><path d="M159,166.5 L172.5,166.5 L177.8,161.8 M172.5,166.5 L172.5,177.5" fill="none" stroke="#1a1a1a" stroke-width="0.9"/><rect x="160.5" y="167.5" width="10.5" height="8.5" fill="none" stroke="#2cb82c" stroke-width="1.4"/><path d="M166,172 L172,167" stroke="#2cb82c" stroke-width="1"/><circle cx="160.5" cy="167.5" r="2.2" fill="url(#ballg)" stroke="#12408a" stroke-width="0.6"/><circle cx="171" cy="167.5" r="2.2" fill="url(#ballg)" stroke="#12408a" stroke-width="0.6"/><circle cx="160.5" cy="176" r="2.2" fill="url(#ballg)" stroke="#12408a" stroke-width="0.6"/><circle cx="171" cy="176" r="2.2" fill="url(#ballg)" stroke="#12408a" stroke-width="0.6"/><circle cx="166" cy="172" r="2" fill="url(#ballg)" stroke="#12408a" stroke-width="0.6"/>
<path d="M187.5,162.5 C192,163 197,161 201,162.5 C201,166 197,169.5 197,171 C198,173 202,175 201,178 C196,179.5 192,179 189,178 C190,174 193,172 193,170 C193,168 188,166 187.5,162.5 Z" fill="url(#bsurf)" stroke="#1a1a1a" stroke-width="1"/><path d="M187.5,162 L191,168.5 L187.5,177" fill="none" stroke="#0a280a" stroke-width="2.5999999999999996" stroke-linecap="round" stroke-linejoin="round"/><path d="M187.5,162 L191,168.5 L187.5,177" fill="none" stroke="#46cc46" stroke-width="1.2" stroke-linecap="round" stroke-linejoin="round"/><circle cx="187.5" cy="162.2" r="2.2" fill="url(#ballg)" stroke="#12408a" stroke-width="0.6"/><circle cx="194" cy="161.3" r="2.2" fill="url(#ballg)" stroke="#12408a" stroke-width="0.6"/><circle cx="201" cy="162.5" r="2.2" fill="url(#ballg)" stroke="#12408a" stroke-width="0.6"/><circle cx="191" cy="168.5" r="2.2" fill="url(#ballg)" stroke="#12408a" stroke-width="0.6"/><circle cx="187.5" cy="177.3" r="2.2" fill="url(#ballg)" stroke="#12408a" stroke-width="0.6"/>
<path d="M212.3,169 L218,162.3 L228.2,162.3 L228.2,171.5 L222.75,177.3 L212.3,177.3 Z" fill="#b8dcfc" stroke="#1a1a1a" stroke-width="0.9"/><path d="M212.3,169 L222.75,169 L228.2,162.3 M222.75,169 L222.75,177.3" fill="none" stroke="#1a1a1a" stroke-width="0.8"/><path d="M213.5,169 L221.5,169 M213.5,177.3 L221.5,177.3 M212.3,170.5 L212.3,176 M222.75,170.5 L222.75,176 M220,162.3 L227,162.3 M228.2,163.5 L228.2,170.5" stroke="#2cc82c" stroke-width="1.2"/><path d="M213,176.5 L222,169.8" stroke="#5a8ac0" stroke-width="0.7"/><circle cx="212.3" cy="169" r="2.2" fill="url(#ballg)" stroke="#12408a" stroke-width="0.6"/><circle cx="222.75" cy="169" r="2.2" fill="url(#ballg)" stroke="#12408a" stroke-width="0.6"/><circle cx="212.3" cy="177.3" r="2.2" fill="url(#ballg)" stroke="#12408a" stroke-width="0.6"/><circle cx="222.75" cy="177.3" r="2.2" fill="url(#ballg)" stroke="#12408a" stroke-width="0.6"/><circle cx="228.2" cy="162.3" r="1.2" fill="#fff" stroke="#000" stroke-width="0.6"/>
</g></svg>
<!-- PANEL 2 -->
<div class="a" style="left:6px;top:224px;width:252px;height:2px;background:#5e5e64;"></div>
<div class="a" style="left:6px;top:226px;width:250px;height:433px;background:#fff;"></div>
<div class="a" style="left:256px;top:226px;width:2px;height:434px;background:#7c7c84;"></div>
<div class="a" style="left:6px;top:658px;width:252px;height:2px;background:#707078;"></div>
<div class="a" style="left:10px;top:229px;width:244px;height:23px;background:#9db6d6;"></div>
<div class="t" style="left:12px;top:236px;font-size:10.9px;font-weight:bold;">Construction\Point Picker</div>
<svg class="a" style="left:241px;top:236px" width="11" height="10" viewBox="0 0 11 10"><path d="M1.5,1 L9.5,9 M9.5,1 L1.5,9" stroke="#000" stroke-width="1.45"/></svg>
<div class="a" style="left:10px;top:252px;width:244px;height:28px;background:linear-gradient(to bottom,#fbfbfe 0%,#f4f4fa 35%,#d8d8e6 70%,#b8b8cc 100%);"></div>
<div class="a" style="left:68px;top:256px;width:1px;height:20px;background:#c4c4d0;"></div>
<div class="a" style="left:103px;top:256px;width:1px;height:20px;background:#c4c4d0;"></div>
<div class="a" style="left:10px;top:280px;width:244px;height:352px;background:#fff;"></div>
<div class="a" style="left:10px;top:321px;width:19px;height:76px;background:#ececec;"></div>
<div class="a" style="left:120px;top:283px;width:1px;height:19px;background:#e4e4e4;"></div>
<div class="a" style="left:119px;top:302px;width:1px;height:328px;background:#e4e4e4;"></div>
<div class="a" style="left:10px;top:321px;width:244px;height:1px;background:#e8e8e8;"></div>
<div class="a" style="left:29px;top:340px;width:225px;height:1px;background:#e8e8e8;"></div>
<div class="a" style="left:29px;top:359px;width:225px;height:1px;background:#e8e8e8;"></div>
<div class="a" style="left:29px;top:378px;width:225px;height:1px;background:#e8e8e8;"></div>
<div class="a" style="left:29px;top:397px;width:225px;height:1px;background:#e8e8e8;"></div>
<div class="a" style="left:10px;top:416px;width:244px;height:1px;background:#e8e8e8;"></div>
<div class="a" style="left:10px;top:435px;width:244px;height:1px;background:#e8e8e8;"></div>
<div class="t" style="left:15px;top:286.5px;font-size:11.5px;">Property</div>
<div class="t" style="left:126px;top:286.5px;font-size:11.5px;">Value</div>
<div class="t" style="left:15px;top:306.5px;font-size:11.5px;">Method:</div>
<div class="t" style="left:124.5px;top:306.5px;font-size:11.5px;">Pick Point From View</div>
<div class="t" style="left:33.5px;top:325.5px;font-size:11.5px;">Position</div>
<div class="t" style="left:124.5px;top:325.5px;font-size:11.5px;letter-spacing:-0.24px;">-0.899..., 0.699..., 0.3</div>
<div class="t" style="left:52px;top:344.5px;font-size:11.5px;">X</div>
<div class="t" style="left:124.5px;top:344.5px;font-size:11.5px;letter-spacing:-0.2px;">-0.899...</div>
<div class="t" style="left:52px;top:363.5px;font-size:11.5px;">Y</div>
<div class="t" style="left:124.5px;top:363.5px;font-size:11.5px;letter-spacing:-0.2px;">0.699...</div>
<div class="t" style="left:52px;top:382.5px;font-size:11.5px;">Z</div>
<div class="t" style="left:124.5px;top:382.5px;font-size:11.5px;">0.3</div>
<div class="t" style="left:15px;top:401.5px;font-size:11.5px;">Snap to:</div>
<div class="t" style="left:124.5px;top:401.5px;font-size:11.5px;">Vertex</div>
<div class="t" style="left:15px;top:420.5px;font-size:11.5px;">Vertex Name</div>
<div class="a" style="left:15px;top:326px;width:7px;height:7px;border:1px solid #909090;background:#fafafa;"></div>
<div class="a" style="left:17px;top:330px;width:5px;height:1px;background:#3050a0;"></div>
<div class="a" style="left:11px;top:634px;width:239px;height:18px;background:#efefef;border-top:2px solid #707070;border-left:2px solid #707070;border-bottom:1px solid #f4f4f4;border-right:1px solid #dcdcdc;"></div>
<div class="t" style="left:14px;top:637.5px;font-size:11px;font-weight:bold;color:#000;">Origin</div>
<svg class="a" style="left:0;top:0" width="260" height="664"><path d="M239.2,644.2 L242.5,640.6 L245.8,644.2 M239.2,649 L242.5,652.6 L245.8,649" stroke="#4a4a4a" stroke-width="1.9" fill="none"/><line x1="234.5" y1="636" x2="234.5" y2="653" stroke="#fafafa" stroke-width="1"/></svg>
<!-- toolbar icons -->
<svg class="a" style="left:0;top:0" width="260" height="664">
<polygon points="17.2,268.2 20.8,264.6 23.4,267.2 32.8,257.8 32.8,264.8 23.4,274.4" fill="#3cdc3c" stroke="#101010" stroke-width="1.1" stroke-linejoin="round"/>
<circle cx="51" cy="265.6" r="7.2" fill="#d8d8e0" stroke="#ee0000" stroke-width="2.6"/>
<circle cx="51" cy="265.6" r="8.6" fill="none" stroke="#111" stroke-width="0.9"/>
<circle cx="51" cy="265.6" r="5.7" fill="none" stroke="#111" stroke-width="0.8"/>
<line x1="46.4" y1="261" x2="55.6" y2="270.2" stroke="#111" stroke-width="3.6"/>
<line x1="46.2" y1="260.8" x2="55.8" y2="270.4" stroke="#ee0000" stroke-width="2.2"/>
<rect x="78.3" y="258.5" width="5.6" height="5.8" fill="#fff" stroke="#5b9bd8" stroke-width="1.1"/>
<rect x="78.3" y="267.5" width="5.6" height="5.8" fill="#fff" stroke="#5b9bd8" stroke-width="1.1"/>
<path d="M79.4,261.4 h3.4 M81.1,259.7 v3.4 M79.4,270.4 h3.4 M81.1,268.7 v3.4" stroke="#000" stroke-width="1"/>
<path d="M85.5,260.3 h3.8 M85.5,271.4 h3.8" stroke="#404040" stroke-width="1.1"/>
<path d="M85.5,262.4 h2.6 M89.6,262.4 h2.6 M85.5,264.4 h2.6 M89.6,264.4 h2.6 M85.5,266.4 h2.6 M89.6,266.4 h2.6 M85.5,273.4 h2.6 M89.6,273.4 h2.6" stroke="#7c98b8" stroke-width="1"/>
<path d="M246.5,405 L246.5,421.5 L250.5,417.8 L253.6,424 L256,423 L253,416.6 L257.6,416.6 Z" fill="#fff" stroke="#000" stroke-width="1.1" stroke-linejoin="round"/>
</svg>
</body></html>
